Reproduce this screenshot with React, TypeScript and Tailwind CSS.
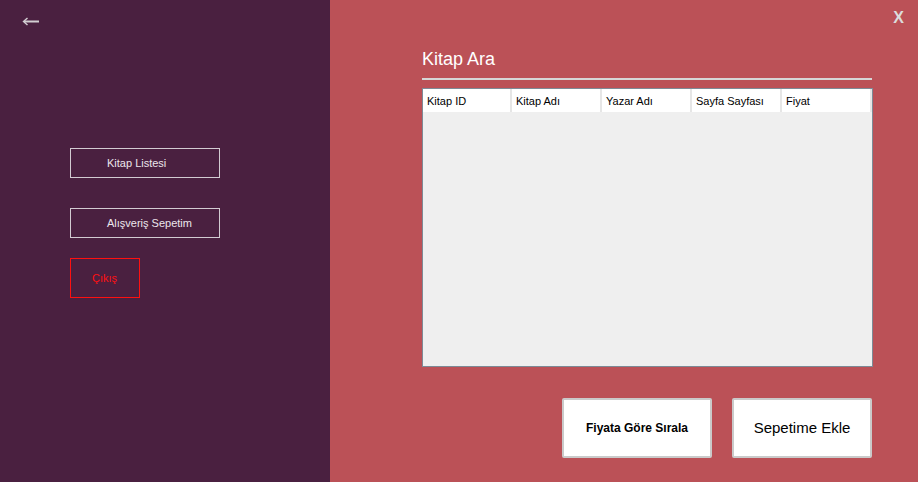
import React from "react";

const cols = [
  { label: "Kitap ID", w: "w-[89px]" },
  { label: "Kitap Adı", w: "w-[90px]" },
  { label: "Yazar Adı", w: "w-[90px]" },
  { label: "Sayfa Sayfası", w: "w-[90px]" },
  { label: "Fiyat", w: "w-[90px]" },
];

export default function App() {
  return (
    <div className="flex w-[918px] h-[482px] overflow-hidden font-['Liberation_Sans',Arial,sans-serif]">
      {/* Left panel */}
      <div className="w-[330px] h-full bg-[#4a2040] flex flex-col">
        <div className="h-[40px] pl-[22px] pt-[17px]">
          <svg width="18" height="9" viewBox="0 0 18 9" fill="none">
            <path d="M2 4.5H17" stroke="#d2ced2" strokeWidth="2" />
            <path d="M5.5 1L1.5 4.5L5.5 8" stroke="#d2ced2" strokeWidth="1.4" />
          </svg>
        </div>
        <div className="flex flex-col pl-[70px] pt-[108px]">
          <div className="w-[150px] h-[30px] border border-[#d2cbd2] flex items-center pl-[36px] text-[11px] text-[#ece6ec]">
            Kitap Listesi
          </div>
          <div className="w-[150px] h-[30px] border border-[#d2cbd2] flex items-center pl-[36px] mt-[30px] text-[11px] text-[#ece6ec]">
            Alışveriş Sepetim
          </div>
          <div className="w-[70px] h-[40px] border border-[#ff1010] flex items-center pl-[21px] mt-[20px] text-[11px] text-[#ff1010]">
            Çıkış
          </div>
        </div>
      </div>

      {/* Right panel */}
      <div className="relative flex-1 h-full bg-[#bb5157]">
        <div className="absolute right-[14px] top-[8px] text-[16px] font-bold text-[#dcdcdc] leading-[20px]">X</div>
        <div className="ml-[92px] w-[451px] flex flex-col pt-[50px]">
          <div className="text-[18px] leading-[18px] text-white">Kitap Ara</div>
          <div className="mt-[10px] h-[2px] bg-[#d6d6d6] w-[450px]" />
          <div className="mt-[8px] h-[279px] border border-[#7d8a96] bg-[#efefef] flex flex-col">
            <div className="flex h-[23px] bg-white">
              {cols.map((c) => (
                <div
                  key={c.label}
                  className={`${c.w} h-full border-r-2 border-[#e6e6e6] flex items-center pl-[4px] pt-[2px] text-[11px] text-black`}
                >
                  {c.label}
                </div>
              ))}
            </div>
          </div>
          <div className="flex justify-end gap-[20px] mt-[31px] pr-[1px]">
            <div className="w-[150px] h-[60px] bg-white border-2 border-[#cacaca] rounded-[2px] flex items-center justify-center text-[12px] font-bold text-black">
              Fiyata Göre Sırala
            </div>
            <div className="w-[140px] h-[60px] bg-white border-2 border-[#cacaca] rounded-[2px] flex items-center justify-center text-[15px] text-black">
              Sepetime Ekle
            </div>
          </div>
        </div>
      </div>
    </div>
  );
}
